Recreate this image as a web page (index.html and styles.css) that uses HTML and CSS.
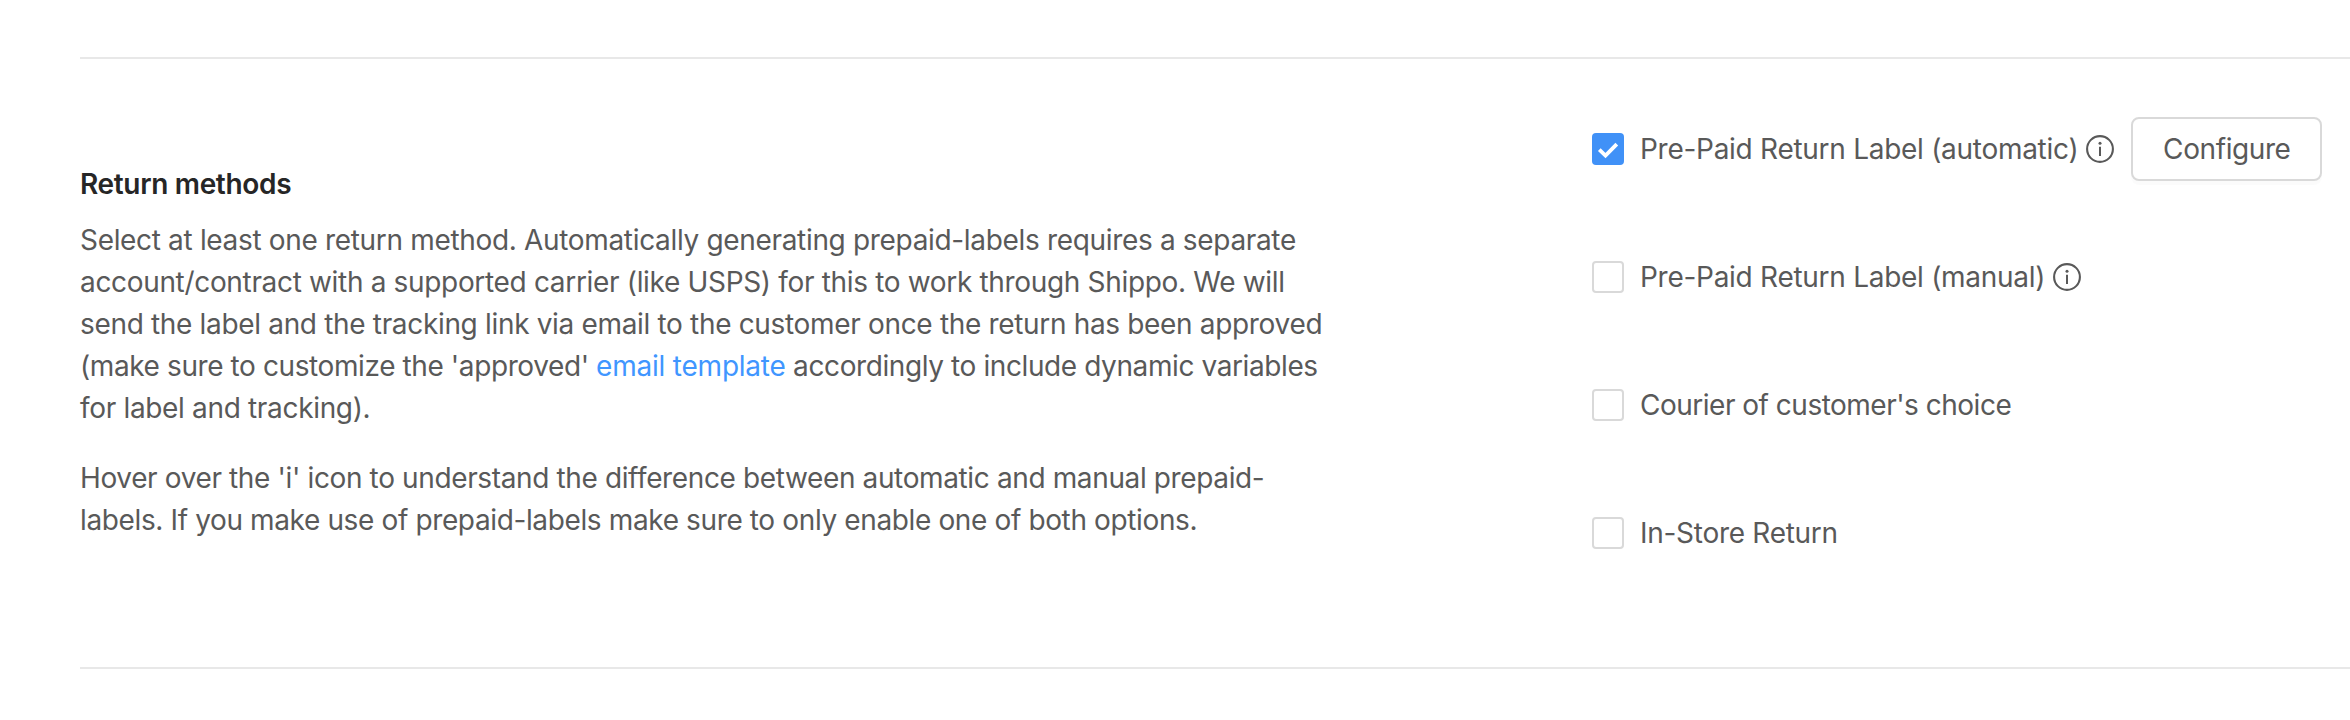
FILE: index.html
```
<!DOCTYPE html>
<html lang="en">
<head>
    <meta charset="UTF-8">
    <title>Return methods</title>
    <link rel="stylesheet" href="styles.css">
</head>
<body>
    <section class="settings-row">
        <div class="description">
            <h2>Return methods</h2>
            <p>
                <span class="line">Select at least one return method. Automatically generating prepaid-labels requires a separate</span>
                <span class="line">account/contract with a supported carrier (like USPS) for this to work through Shippo. We will</span>
                <span class="line">send the label and the tracking link via email to the customer once the return has been approved</span>
                <span class="line tight">(make sure to customize the 'approved' <a href="#">email template</a> accordingly to include dynamic variables</span>
                <span class="line">for label and tracking).</span>
            </p>
            <p>
                <span class="line snug">Hover over the 'i' icon to understand the difference between automatic and manual prepaid-</span>
                <span class="line snug">labels. If you make use of prepaid-labels make sure to only enable one of both options.</span>
            </p>
        </div>
        <div class="methods">
            <div class="method">
                <span class="checkbox checked">
                    <svg width="32" height="32" viewBox="0 0 32 32"><path d="M7.3 16.6L13.5 22.6L24.8 11.1" fill="none" stroke="#fff" stroke-width="3.8"/></svg>
                </span>
                <span class="label">Pre-Paid Return Label (automatic)</span>
                <svg class="info" width="28" height="28" viewBox="0 0 28 28"><circle cx="14" cy="14" r="12.9" fill="none" stroke="#595959" stroke-width="2.1"/><circle cx="14" cy="8.3" r="1.5" fill="#595959"/><path d="M14 11.8v9.2" stroke="#595959" stroke-width="2"/></svg>
                <button class="btn">Configure</button>
            </div>
            <div class="method">
                <span class="checkbox"></span>
                <span class="label">Pre-Paid Return Label (manual)</span>
                <svg class="info" width="28" height="28" viewBox="0 0 28 28"><circle cx="14" cy="14" r="12.9" fill="none" stroke="#595959" stroke-width="2.1"/><circle cx="14" cy="8.3" r="1.5" fill="#595959"/><path d="M14 11.8v9.2" stroke="#595959" stroke-width="2"/></svg>
            </div>
            <div class="method">
                <span class="checkbox"></span>
                <span class="label courier">Courier of customer's choice</span>
            </div>
            <div class="method">
                <span class="checkbox"></span>
                <span class="label">In-Store Return</span>
            </div>
        </div>
    </section>
</body>
</html>
```
FILE: styles.css
```
* {
    margin: 0;
    padding: 0;
    box-sizing: border-box;
}

body {
    font-family: Inter, sans-serif;
    font-size: 28px;
    line-height: 42px;
    letter-spacing: -0.33px;
    color: #595959;
    background: #fff;
    overflow: hidden;
}

.settings-row {
    display: flex;
    height: 612px;
    margin: 57px 0 0 80px;
    border-top: 2px solid #e8e8e8;
    border-bottom: 2px solid #e8e8e8;
}

.description {
    width: 1512px;
    padding-top: 104px;
}

.description h2 {
    font-size: 28px;
    font-weight: 600;
    color: #262626;
    margin-bottom: 14px;
}

.description p {
    margin-bottom: 28px;
}

.line {
    display: block;
    white-space: nowrap;
}

.line.snug {
    letter-spacing: -0.37px;
}

.line.tight {
    letter-spacing: -0.4px;
}

.description a {
    color: #4096ff;
    letter-spacing: -0.22px;
    text-decoration: none;
}

.methods {
    padding-top: 26px;
}

.method {
    display: flex;
    align-items: center;
    height: 128px;
}

.checkbox {
    width: 32px;
    height: 32px;
    border: 2px solid #d9d9d9;
    border-radius: 4px;
    margin-right: 16px;
}

.checkbox.checked {
    border: none;
    background: #4091f7;
}

.checkbox svg {
    display: block;
}

.label {
    letter-spacing: -0.28px;
    white-space: nowrap;
}

.label.courier {
    letter-spacing: -0.5px;
}

.info {
    margin-left: 8px;
}

.btn {
    width: 191px;
    height: 64px;
    margin-left: 17px;
    font: inherit;
    letter-spacing: -0.4px;
    color: #595959;
    background: #fff;
    border: 2px solid #d9d9d9;
    border-radius: 8px;
    box-shadow: 0 4px 0 rgba(0, 0, 0, 0.016);
}
```
